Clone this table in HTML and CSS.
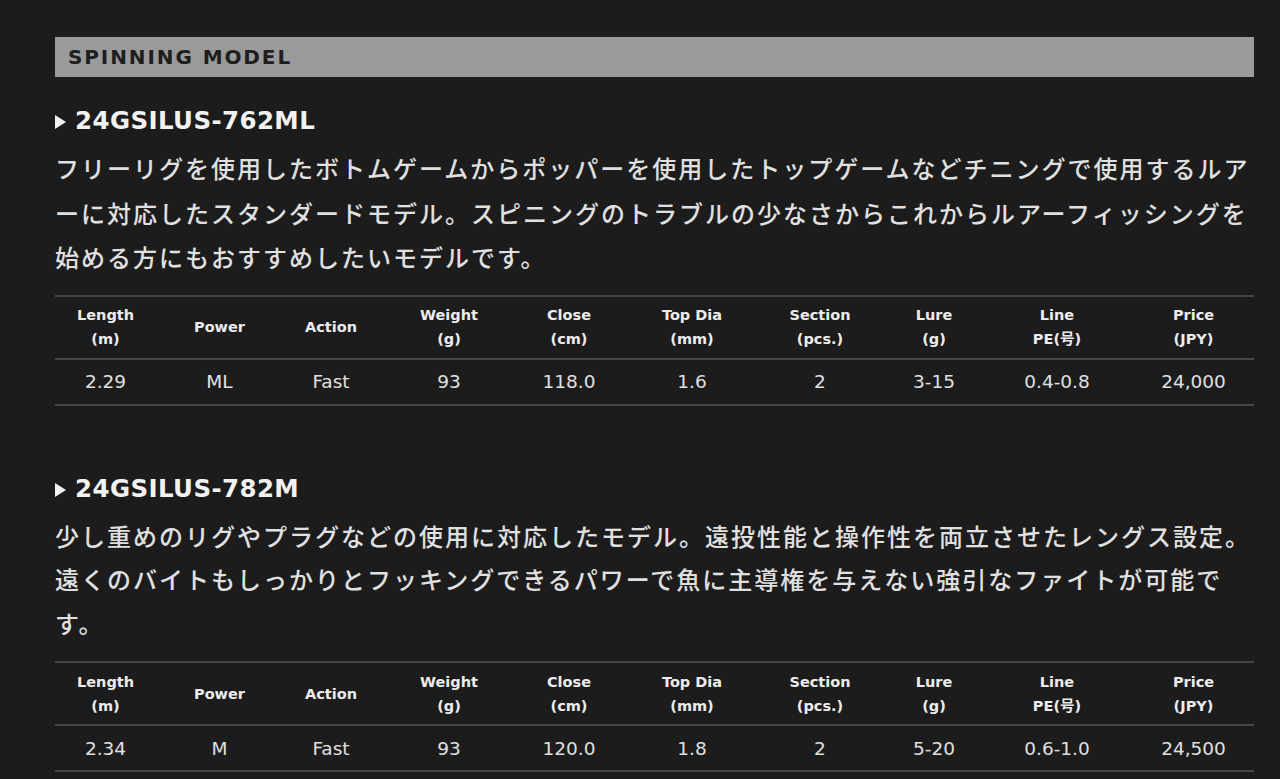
FILE: index.html
```html
<!DOCTYPE html>
<html lang="ja">
<head>
<meta charset="utf-8">
<title>SPINNING MODEL</title>
<link rel="stylesheet" href="styles.css">
</head>
<body>
<main class="page">
  <h2 class="bar">SPINNING MODEL</h2>

  <section class="model">
    <h3 class="model-title"><span class="tri"></span>24GSILUS-762ML</h3>
    <p class="desc">フリーリグを使用したボトムゲームからポッパーを使用したトップゲームなどチニングで使用するルアーに対応したスタンダードモデル。スピニングのトラブルの少なさからこれからルアーフィッシングを始める方にもおすすめしたいモデルです。</p>
    <table class="spec">
      <thead>
        <tr>
          <th>Length<br>(m)</th><th>Power</th><th>Action</th><th>Weight<br>(g)</th><th>Close<br>(cm)</th><th>Top Dia<br>(mm)</th><th>Section<br>(pcs.)</th><th>Lure<br>(g)</th><th>Line<br>PE(号)</th><th>Price<br>(JPY)</th>
        </tr>
      </thead>
      <tbody>
        <tr>
          <td>2.29</td><td>ML</td><td>Fast</td><td>93</td><td>118.0</td><td>1.6</td><td>2</td><td>3-15</td><td>0.4-0.8</td><td>24,000</td>
        </tr>
      </tbody>
    </table>
  </section>

  <section class="model second">
    <h3 class="model-title"><span class="tri"></span>24GSILUS-782M</h3>
    <p class="desc">少し重めのリグやプラグなどの使用に対応したモデル。遠投性能と操作性を両立させたレングス設定。遠くのバイトもしっかりとフッキングできるパワーで魚に主導権を与えない強引なファイトが可能です。</p>
    <table class="spec">
      <thead>
        <tr>
          <th>Length<br>(m)</th><th>Power</th><th>Action</th><th>Weight<br>(g)</th><th>Close<br>(cm)</th><th>Top Dia<br>(mm)</th><th>Section<br>(pcs.)</th><th>Lure<br>(g)</th><th>Line<br>PE(号)</th><th>Price<br>(JPY)</th>
        </tr>
      </thead>
      <tbody>
        <tr>
          <td>2.34</td><td>M</td><td>Fast</td><td>93</td><td>120.0</td><td>1.8</td><td>2</td><td>5-20</td><td>0.6-1.0</td><td>24,500</td>
        </tr>
      </tbody>
    </table>
  </section>
</main>
</body>
</html>
```

FILE: styles.css
```css
html, body {
  margin: 0;
  padding: 0;
  background: #1c1c1c;
  height: 100%;
  overflow: hidden;
}

body {
  font-family: "DejaVu Sans", "Noto Sans CJK JP", sans-serif;
  color: #e2e2e2;
}

.page {
  width: 1199px;
  margin-left: 55px;
  padding-top: 37px;
}

.bar {
  margin: 0;
  height: 40px;
  background: #9a9a9a;
  color: #1e1e1e;
  font-size: 20px;
  font-weight: bold;
  letter-spacing: 1.9px;
  line-height: 41px;
  padding-left: 13px;
}

.model-title {
  margin: 29px 0 0 0;
  font-size: 24.5px;
  font-weight: bold;
  letter-spacing: 0.4px;
  line-height: 30px;
  color: #f2f2f2;
  display: flex;
  align-items: center;
}

.second .model-title {
  margin-top: 68px;
}

.tri {
  display: inline-block;
  width: 0;
  height: 0;
  border-top: 7px solid transparent;
  border-bottom: 7px solid transparent;
  border-left: 11px solid #f2f2f2;
  margin-right: 9px;
  margin-top: 2px;
}

.desc {
  margin: 10px 0 0 0;
  font-family: "Noto Sans CJK JP", sans-serif;
  font-size: 24px;
  font-weight: 500;
  letter-spacing: 2px;
  line-height: 44.5px;
  color: #e0e0e0;
  line-break: loose;
}

.second .desc {
  margin-top: 10px;
  line-height: 43.5px;
}

.spec {
  width: 100%;
  margin-top: 15px;
  border-collapse: collapse;
  table-layout: fixed;
  text-align: center;
}

.second .spec {
  margin-top: 17px;
}

.spec th {
  font-weight: bold;
  font-size: 14.5px;
  line-height: 24px;
  color: #ececec;
  height: 61px;
  padding: 0;
  border-top: 2px solid #464646;
  border-bottom: 2px solid #464646;
  vertical-align: middle;
}

.spec td {
  font-size: 18.5px;
  color: #e0e0e0;
  height: 44px;
  padding: 0;
  border-bottom: 2px solid #464646;
  vertical-align: middle;
}

.spec th:nth-child(1) { width: 101px; }
.spec th:nth-child(2) { width: 127px; }
.spec th:nth-child(3) { width: 96px; }
.spec th:nth-child(4) { width: 140px; }
.spec th:nth-child(5) { width: 100px; }
.spec th:nth-child(6) { width: 146px; }
.spec th:nth-child(7) { width: 110px; }
.spec th:nth-child(8) { width: 118px; }
.spec th:nth-child(9) { width: 128px; }
.spec th:nth-child(10) { width: 121px; }

.spec th:nth-child(10),
.spec td:nth-child(10) {
  padding-left: 12px;
}
```
